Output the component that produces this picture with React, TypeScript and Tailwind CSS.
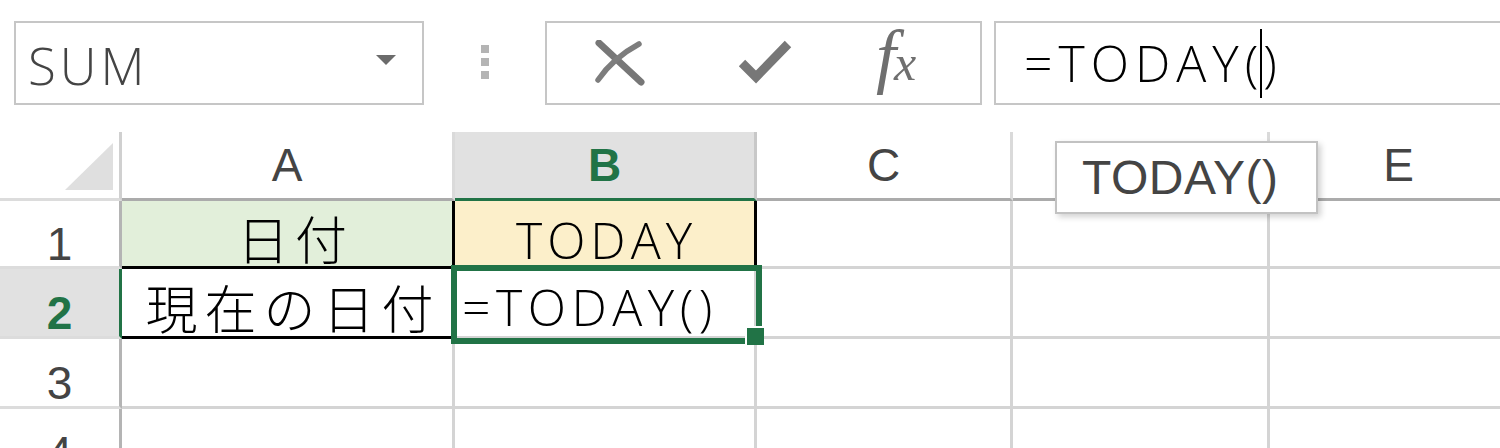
import React from "react";

const thin = "font-['Open_Sans','Noto_Sans_CJK_JP',sans-serif] font-light";
const hdr = "flex shrink-0 items-center justify-center border-r-[3px] border-b-[3px] text-[46px] leading-none";
const rowHdr = "flex w-[122px] shrink-0 items-center justify-center border-r-[3px] border-b-[3px] border-b-[#dcdcdc] pt-[20px] text-[46px] leading-none";
const cell = "shrink-0 border-r-[3px] border-b-[3px] border-[#d4d4d4]";

function EmptyCells() {
  return (
    <>
      <div className={`${cell} w-[256px]`} />
      <div className={`${cell} w-[257px]`} />
      <div className={`${cell} w-[260px]`} />
    </>
  );
}

export default function App() {
  return (
    <div className="relative h-[448px] w-[1500px] overflow-hidden bg-white font-['Liberation_Sans','Noto_Sans_CJK_JP',sans-serif]">
      {/* Formula bar */}
      <div className="flex h-[132px] items-start pt-[21px]">
        <div className="ml-[14px] flex h-[84px] w-[410px] shrink-0 items-center border-2 border-[#c6c6c6] pl-[12px] pr-[26px]">
          <span className={`flex-1 pt-[4px] text-[51px] leading-none tracking-[4px] text-[#444] ${thin}`}>SUM</span>
          <svg width="20" height="11" className="mb-[6px]">
            <polygon points="0,0 20,0 10,10" fill="#6b6b6b" />
          </svg>
        </div>
        <div className="flex w-[121px] shrink-0 flex-col items-center gap-[5px] pt-[24px]">
          <div className="h-[8px] w-[8px] bg-[#b4b4b4]" />
          <div className="h-[8px] w-[8px] bg-[#b4b4b4]" />
          <div className="h-[8px] w-[8px] bg-[#b4b4b4]" />
        </div>
        <div className="flex h-[84px] w-[437px] shrink-0 items-center border-2 border-[#c6c6c6] pl-[48px]">
          <svg width="50" height="46" viewBox="0 0 50 46">
            <path d="M4 3 L46 42" stroke="#777" strokeWidth="7" strokeLinecap="round" />
            <path d="M3 40 Q18 18 44 4" stroke="#7d7d7d" strokeWidth="5.5" fill="none" strokeLinecap="round" />
          </svg>
          <svg width="54" height="46" viewBox="0 0 54 46" className="ml-[93px]">
            <path d="M4 23 L18 37 L50 4" stroke="#777" strokeWidth="9" fill="none" strokeLinejoin="miter" />
          </svg>
          <div className="ml-[84px] flex items-baseline pb-[14px] font-['Liberation_Serif',serif] italic leading-none text-[#6f6f6f]">
            <span className="text-[72px]">f</span>
            <span className="-ml-[2px] text-[50px]">x</span>
          </div>
        </div>
        <div className="ml-[12px] flex h-[84px] w-[530px] shrink-0 items-center border-2 border-r-0 border-[#c6c6c6] pl-[28px]">
          <span className={`text-[50px] leading-none tracking-[6px] text-black ${thin}`}>=TODAY(</span>
          <div className="ml-[-4px] mr-[1px] h-[69px] w-[2px] bg-black" />
          <span className={`text-[50px] leading-none text-black ${thin}`}>)</span>
        </div>
      </div>

      {/* Grid */}
      <div className="relative">
        {/* header row */}
        <div className="flex h-[69px]">
          <div className="flex w-[122px] shrink-0 items-end justify-end border-r-[3px] border-b-[3px] border-r-[#d0d0d0] border-b-[#dcdcdc] pb-[8px] pr-[6px]">
            <svg width="48" height="47">
              <polygon points="48,0 48,47 0,47" fill="#dfdfdf" />
            </svg>
          </div>
          <div className={`${hdr} w-[333px] border-r-[#dadada] border-b-[#ababab] text-[#444]`}>A</div>
          <div className={`${hdr} w-[302px] border-r-[#c8c8c8] border-b-[#217346] bg-[#e1e1e1] font-bold text-[#217346]`}>B</div>
          <div className={`${hdr} w-[256px] border-r-[#dadada] border-b-[#ababab] text-[#444]`}>C</div>
          <div className={`${hdr} w-[257px] border-r-[#dadada] border-b-[#ababab] text-[#444]`}>D</div>
          <div className={`${hdr} w-[260px] border-r-[#dadada] border-b-[#ababab] text-[#444]`}>E</div>
        </div>

        {/* row 1 */}
        <div className="flex h-[68px]">
          <div className={`${rowHdr} border-r-[#b4b4b4] text-[#444]`}>1</div>
          <div className={`flex w-[333px] shrink-0 items-center justify-center border-r-[3px] border-b-[3px] border-black bg-[#e2efda] pl-[16px] pt-[13px] text-[52px] leading-none tracking-[6px] text-black ${thin}`}>日付</div>
          <div className={`flex w-[302px] shrink-0 items-center justify-center border-r-[3px] border-b-[3px] border-black bg-[#fcefca] pl-[4px] pt-[12px] text-[50px] leading-none tracking-[5px] text-black ${thin}`}>TODAY</div>
          <EmptyCells />
        </div>

        {/* row 2 */}
        <div className="flex h-[70px]">
          <div className={`${rowHdr} border-r-[#217346] bg-[#e1e1e1] font-bold text-[#217346]`}>2</div>
          <div className={`flex w-[333px] shrink-0 items-center justify-center border-r-[3px] border-b-[3px] border-black pl-[12px] pt-[13px] text-[52px] leading-none tracking-[7px] text-black ${thin}`}>現在の日付</div>
          <div className={`flex w-[302px] shrink-0 items-center border-r-[3px] border-b-[3px] border-[#d4d4d4] pl-[7px] pt-[8px] text-[50px] leading-none tracking-[5.5px] text-black ${thin}`}>=TODAY()</div>
          <EmptyCells />
        </div>

        {/* row 3 */}
        <div className="flex h-[70px]">
          <div className={`${rowHdr} border-r-[#b4b4b4] text-[#444]`}>3</div>
          <div className={`${cell} w-[333px]`} />
          <div className={`${cell} w-[302px]`} />
          <EmptyCells />
        </div>

        {/* row 4 */}
        <div className="flex h-[70px]">
          <div className={`${rowHdr} border-r-[#b4b4b4] text-[#444]`}>4</div>
          <div className={`${cell} w-[333px]`} />
          <div className={`${cell} w-[302px]`} />
          <EmptyCells />
        </div>

        {/* selection */}
        <div className="pointer-events-none absolute left-[451px] top-[133px] h-[79px] w-[311px] border-[6px] border-[#217346]" />
        <div className="pointer-events-none absolute left-[745px] top-[194px] h-[19px] w-[19px] border-l-2 border-t-2 border-white bg-[#217346]" />
      </div>

      {/* tooltip */}
      <div className="absolute left-[1055px] top-[141px] flex h-[73px] w-[263px] items-center border-2 border-[#c2c2c2] bg-white pl-[25px] shadow-[3px_3px_6px_rgba(0,0,0,0.18)]">
        <span className="text-[48px] leading-none tracking-[0.5px] text-[#444]">TODAY()</span>
      </div>
    </div>
  );
}
